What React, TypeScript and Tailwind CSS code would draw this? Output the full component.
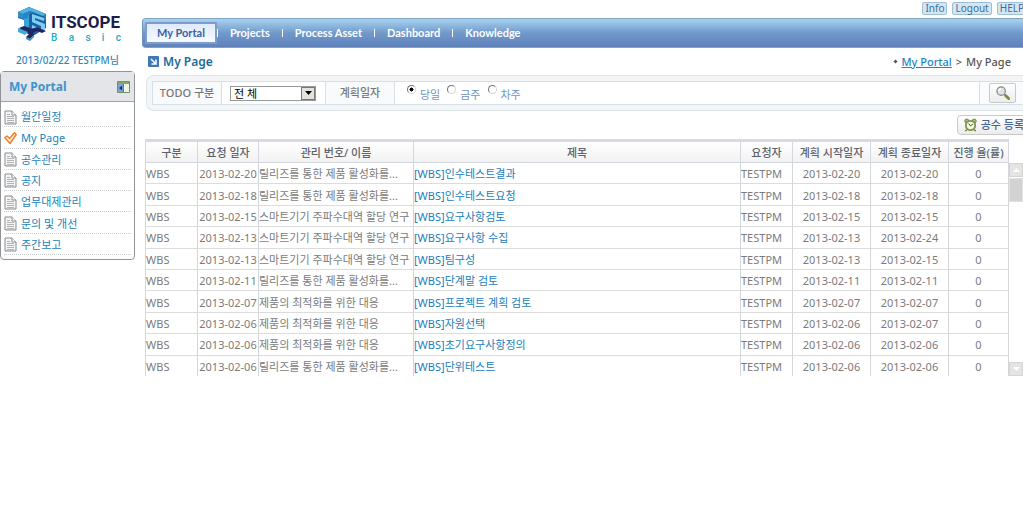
import React, { useState } from 'react';

interface Todo {
  requested: string;
  project: string;
  title: string;
  start: string;
  end: string;
}

const NAV = ['My Portal', 'Projects', 'Process Asset', 'Dashboard', 'Knowledge'];
const MENU = ['월간일정', 'My Page', '공수관리', '공지', '업무대제관리', '문의 및 개선', '주간보고'];
const PERIODS = ['당일', '금주', '차주'];

const RELEASE = '릴리즈를 통한 제품 활성화를...';
const SMART = '스마트기기 주파수대역 할당 연구';
const OPTIMIZE = '제품의 최적화를 위한 대응';

const TODOS: Todo[] = [
  { requested: '2013-02-20', project: RELEASE, title: '인수테스트결과', start: '2013-02-20', end: '2013-02-20' },
  { requested: '2013-02-18', project: RELEASE, title: '인수테스트요청', start: '2013-02-18', end: '2013-02-18' },
  { requested: '2013-02-15', project: SMART, title: '요구사항검토', start: '2013-02-15', end: '2013-02-15' },
  { requested: '2013-02-13', project: SMART, title: '요구사항 수집', start: '2013-02-13', end: '2013-02-24' },
  { requested: '2013-02-13', project: SMART, title: '팀구성', start: '2013-02-13', end: '2013-02-15' },
  { requested: '2013-02-11', project: RELEASE, title: '단계말 검토', start: '2013-02-11', end: '2013-02-11' },
  { requested: '2013-02-07', project: OPTIMIZE, title: '프로젝트 계획 검토', start: '2013-02-07', end: '2013-02-07' },
  { requested: '2013-02-06', project: OPTIMIZE, title: '자원선택', start: '2013-02-06', end: '2013-02-07' },
  { requested: '2013-02-06', project: OPTIMIZE, title: '초기요구사항정의', start: '2013-02-06', end: '2013-02-06' },
  { requested: '2013-02-06', project: RELEASE, title: '단위테스트', start: '2013-02-06', end: '2013-02-06' },
];

const COLUMNS = [
  { label: '구분', width: 'w-[52px]' },
  { label: '요청 일자', width: 'w-[61px]' },
  { label: '관리 번호/ 이름', width: 'w-[155px]' },
  { label: '제목', width: '' },
  { label: '요청자', width: 'w-[52px]' },
  { label: '계획 시작일자', width: 'w-[78px]' },
  { label: '계획 종료일자', width: 'w-[78px]' },
  { label: '진행 율(률)', width: 'w-[60px]' },
];

const LogoMark = () => (
  <svg width="29" height="34" viewBox="0 0 29 34" aria-hidden="true">
    <path d="M0 5 11 0l17 7v14L15 29 1 23l5-3V13L0 11z" fill="#1f5fa6" />
    <path d="M0 5 11 0l17 7-3 2-13-5-7 3z" fill="#4db4e4" />
    <path d="M0 5l5 2v5l-5-2z" fill="#2f8fce" />
    <path d="M6 8l5-2v14l-5 2z" fill="#3aa3dc" />
    <path d="M5 7l7-3 3 1-5 3v3l-5 1z" fill="#2a83c4" />
    <path d="M14 7l12 4v3l-9-3v2l10 4v6l-4 2-9-4v-3l9 4v-3l-9-4z" fill="#7fd0f0" />
    <path d="M28 7v5l-2 2v-5z" fill="#2e79bd" />
    <path d="M1 21l5-2 8 3 5-2 9 4-4 2-5-2-4 2 1 2-4 4-4-2 3-3z" fill="#20265f" />
    <path d="M0 21l10 4-3 3-7-3z" fill="#42a9dd" />
    <path d="M8 30l4 2 4-4v2l-4 4-4-2z" fill="#2f8fce" />
  </svg>
);

const DocIcon = () => (
  <svg width="13" height="15" viewBox="0 0 13 15" aria-hidden="true">
    <path d="M1 1h7l4 4v9H1z" fill="#f4f4f4" stroke="#8b8b8b" />
    <path d="M8 1v4h4" fill="#fff" stroke="#8b8b8b" />
    <path d="M3 4.500h3M3 6.500h7M3 8.500h7M3 10.500h7M3 12.500h7" stroke="#b4b4b4" />
  </svg>
);

const CheckIcon = () => (
  <svg width="13" height="13" viewBox="0 0 13 13" aria-hidden="true">
    <path d="M.8 5.500 3 4l2.500 2.500L10.500.8l1.700 1.700L6 11.500z" fill="#fff3e8" stroke="#f0802c" strokeWidth="1.500" strokeLinejoin="round" />
  </svg>
);

const PanelIcon = () => (
  <svg width="13" height="12" viewBox="0 0 13 12" aria-hidden="true">
    <path d="M.5.5h12v11H.5z" fill="#fff" stroke="#6f8f6a" />
    <path d="M1 1h11v2H1z" fill="#7fae5c" />
    <path d="M1 3h5v8H1z" fill="#7ea4d6" />
    <path d="M6 3h1v8H6z" fill="#55779f" />
    <path d="M5 4.500v5L2 7z" fill="#17386e" />
    <path d="M8 3h4v8H8z" fill="#eef3e2" />
  </svg>
);

const TitleIcon = () => (
  <svg width="11" height="11" viewBox="0 0 11 11" aria-hidden="true">
    <rect width="11" height="11" rx="1" fill="#3f78b4" />
    <path d="M3 3l4.500 4.500M8 3.500V8H3.500" fill="none" stroke="#fff" strokeWidth="1.500" />
  </svg>
);

const SearchIcon = () => (
  <svg width="14" height="14" viewBox="0 0 15 15" aria-hidden="true">
    <path d="M9 9l2 2" stroke="#777" strokeWidth="2" />
    <path d="M10.500 10.500l3 3" stroke="#6f9433" strokeWidth="3" strokeLinecap="round" />
    <circle cx="5.500" cy="5.500" r="4.500" fill="#dfe3e6" stroke="#858585" strokeWidth="1.300" />
    <path d="M3 5.500A2.500 2.500 0 0 1 5.500 3" fill="none" stroke="#fff" strokeWidth="1.500" />
  </svg>
);

const ClockIcon = () => (
  <svg width="13" height="14" viewBox="0 0 14 14" aria-hidden="true">
    <path d="M3 12l-1.500 1.500M11 12l1.500 1.500" stroke="#5d7530" strokeWidth="1.500" />
    <circle cx="3" cy="2.800" r="2.200" fill="#a9bd72" stroke="#6b7f48" />
    <circle cx="11" cy="2.800" r="2.200" fill="#a9bd72" stroke="#6b7f48" />
    <circle cx="7" cy="7.500" r="5" fill="#f3f7e3" stroke="#7d9450" strokeWidth="2" />
    <path d="M5 5.500l2 2.500 2.500-2" fill="none" stroke="#33421a" />
  </svg>
);

const Sidebar = () => (
  <aside className="w-[135px] shrink-0">
    <div className="flex h-[47px] items-start pt-[7px] pl-[18px]">
      <LogoMark />
      <div className="ml-1 w-[70px]">
        <div className="mt-[5px] font-['Roboto',sans-serif] text-[17px] leading-5 font-bold text-[#1d1d4b]">ITSCOPE</div>
        <div className="flex justify-between font-['Roboto',sans-serif] text-[10px] leading-[11px] font-medium text-[#27a9c9]">
          {'Basic'.split('').map((c) => <span key={c}>{c}</span>)}
        </div>
      </div>
    </div>
    <p className="mb-1 h-5 pt-1 text-center text-[10px] leading-[18px] font-medium text-[#3585b9]">2013/02/22 TESTPM님</p>
    <nav className="rounded-sm border border-[#8f9499] bg-white pb-1">
      <div className="flex h-[30px] items-center justify-between border-b border-[#9ea3a8] bg-[#e3e5e8] pt-px pr-1 pl-2">
        <h2 className="text-[12px] font-bold text-[#3f93cc]">My Portal</h2>
        <button type="button" aria-label="메뉴 접기"><PanelIcon /></button>
      </div>
      <ul className="mx-[3px] mt-1 grid h-[149px] auto-rows-fr">
        {MENU.map((item) => (
          <li key={item} className="flex items-center border-b border-dotted border-[#c6ccd0] pt-[2px]">
            <a href="#" className="flex items-center gap-1 text-[#2283ba]">
              {item === 'My Page' ? <CheckIcon /> : <DocIcon />}
              {item}
            </a>
          </li>
        ))}
      </ul>
    </nav>
  </aside>
);

const TopBar = () => (
  <header>
    <div className="-mr-1 flex h-[18px] items-start justify-end gap-[5px] pt-[2px]">
      {['Info', 'Logout', 'HELP'].map((label) => (
        <button key={label} type="button" className="h-[13px] rounded-xs border border-[#9fbfd6] bg-[#d6e6f1] px-[2px] text-[10px] leading-[11px] text-[#3a6ea0]">
          {label}
        </button>
      ))}
    </div>
    <nav className="flex h-[30px] items-center rounded-l-sm border-t border-b border-l border-t-[#7fa6c9] border-b-[#7f9fd6] border-l-[#6f95c6] bg-linear-to-b from-[#a9d2ef] via-[#7199cb] to-[#5f82bb] pl-[2px] font-['Lato',sans-serif]">
      {NAV.map((item, i) => (
        <React.Fragment key={item}>
          {i > 0 && <span className="h-2 w-px bg-white" />}
          <a
            href="#"
            className={
              i === 0
                ? 'flex h-[22px] items-center border-2 border-[#7d9bcb] bg-linear-to-b from-[#dfeafa] to-[#f7faff] px-[10px] font-bold text-[#3f5f9e]'
                : 'px-3 font-bold text-white'
            }
          >
            {item}
          </a>
        </React.Fragment>
      ))}
    </nav>
  </header>
);

const SearchPanel = () => {
  const [period, setPeriod] = useState('당일');
  return (
    <form className="ml-1 rounded-l-lg border border-r-0 border-[#dde4e8] bg-[#f3f5f6] py-[5px] pl-[5px]">
      <div className="flex h-6 items-stretch border border-r-0 border-[#d3e0e8] bg-white">
        <label htmlFor="todo-type" className="flex w-[69px] items-center justify-center border-r border-[#d3e0e8] bg-[#f8fafb] font-medium text-[#777]">
          TODO 구분
        </label>
        <div className="flex w-[104px] items-center border-r border-[#d3e0e8] pl-2">
          <div className="relative">
            <select id="todo-type" className="block h-[15px] w-[86px] appearance-none border border-[#999] bg-white pl-[3px] text-[11px] leading-[13px] text-black">
              <option>전 체</option>
            </select>
            <span className="pointer-events-none absolute top-px right-px flex h-[13px] w-[14px] items-center justify-center border border-[#777] bg-[#e4e2dd]">
              <svg width="7" height="4" viewBox="0 0 7 4"><path d="M0 0h7L3.500 4z" fill="#000" /></svg>
            </span>
          </div>
        </div>
        <span className="flex w-[69px] items-center justify-center border-r border-[#d3e0e8] bg-[#f8fafb] font-medium text-[#777]">계획일자</span>
        <div className="flex flex-1 items-center gap-[7px] pl-3">
          {PERIODS.map((p) => (
            <label key={p} className="flex items-start gap-1 text-[#6f93c4]">
              <input
                type="radio"
                name="period"
                checked={period === p}
                onChange={() => setPeriod(p)}
                className="size-[9px] appearance-none rounded-full border border-[#d8d4cc] border-t-[#777] border-l-[#777] bg-white checked:bg-radial checked:from-black checked:from-35% checked:to-white checked:to-45%"
              />
              <span className="pt-1 leading-3">{p}</span>
            </label>
          ))}
        </div>
        <div className="flex w-[44px] items-center border-l border-[#d3e0e8] bg-[#fafbfc] pl-[9px]">
          <button type="button" aria-label="검색" className="flex h-5 w-[27px] items-center justify-center rounded-xs border border-[#c9c9c9] bg-linear-to-b from-white to-[#ededed]">
            <SearchIcon />
          </button>
        </div>
      </div>
    </form>
  );
};

const TodoTable = () => (
  <div className="ml-[3px] flex">
    <table className="h-[237px] flex-1 table-fixed border-collapse border-t-3 border-t-[#d5dae6] text-[#7b7b7b]">
      <thead>
        <tr className="h-[22px] bg-linear-to-b from-white to-[#f1f1f2]">
          {COLUMNS.map((col) => (
            <th key={col.label} className={`${col.width} border border-t-[#b9c5d6] border-[#d3d8de] p-0 pt-[2px] font-medium whitespace-nowrap text-[#5c626b]`}>
              {col.label}
            </th>
          ))}
        </tr>
      </thead>
      <tbody>
        {TODOS.map((todo) => (
          <tr key={todo.title} className="border-b border-[#dcdcdc] whitespace-nowrap last:border-b-0 [&>td]:border-x [&>td]:border-[#d3d6da] [&>td]:p-0 [&>td]:pt-[2px]">
            <td>WBS</td>
            <td className="text-center">{todo.requested}</td>
            <td className="overflow-hidden">{todo.project}</td>
            <td><a href="#" className="text-[#1b80bd]">[WBS]{todo.title}</a></td>
            <td>TESTPM</td>
            <td className="text-center">{todo.start}</td>
            <td className="text-center">{todo.end}</td>
            <td className="text-center">0</td>
          </tr>
        ))}
      </tbody>
    </table>
    <div className="mt-6 flex w-[14px] shrink-0 flex-col bg-white" aria-hidden="true">
      <span className="flex h-[14px] items-center justify-center border border-[#d5d5d5] bg-[#e4e4e4]">
        <svg width="7" height="4" viewBox="0 0 7 4"><path d="M0 4h7L3.500 0z" fill="#fff" /></svg>
      </span>
      <span className="mt-px h-6 border border-[#e2e2e2] bg-[#d2d2d2]" />
      <span className="mt-auto flex h-[14px] items-center justify-center border border-[#d5d5d5] bg-[#e4e4e4]">
        <svg width="7" height="4" viewBox="0 0 7 4"><path d="M0 0h7L3.500 4z" fill="#fff" /></svg>
      </span>
    </div>
  </div>
);

export default function App() {
  return (
    <div className="flex min-h-screen gap-[7px] overflow-hidden bg-white font-['Noto_Sans','Noto_Sans_CJK_KR',sans-serif] text-[11px] leading-4">
      <Sidebar />
      <main className="min-w-0 flex-1">
        <TopBar />
        <div className="flex h-[27px] items-center justify-between pr-3 pl-[6px]">
          <h1 className="flex items-center gap-1 text-[12px] font-semibold text-[#1d6c9c]">
            <TitleIcon />
            My Page
          </h1>
          <div className="flex items-center gap-1 font-medium text-[#555]">
            <span className="size-[3px] rotate-45 bg-[#555]" />
            <a href="#" className="text-[#1b86c6] underline">My Portal</a>
            <span>&gt;</span>
            <span>My Page</span>
          </div>
        </div>
        <SearchPanel />
        <div className="-mr-1 flex h-[28px] items-center justify-end">
          <button type="button" className="flex h-5 items-center gap-1 rounded-sm border border-[#c9c9c9] bg-linear-to-b from-white to-[#ececec] pr-[2px] pl-[6px] font-medium whitespace-nowrap text-[#45648f]">
            <ClockIcon />
            공수 등록
          </button>
        </div>
        <TodoTable />
      </main>
    </div>
  );
}
